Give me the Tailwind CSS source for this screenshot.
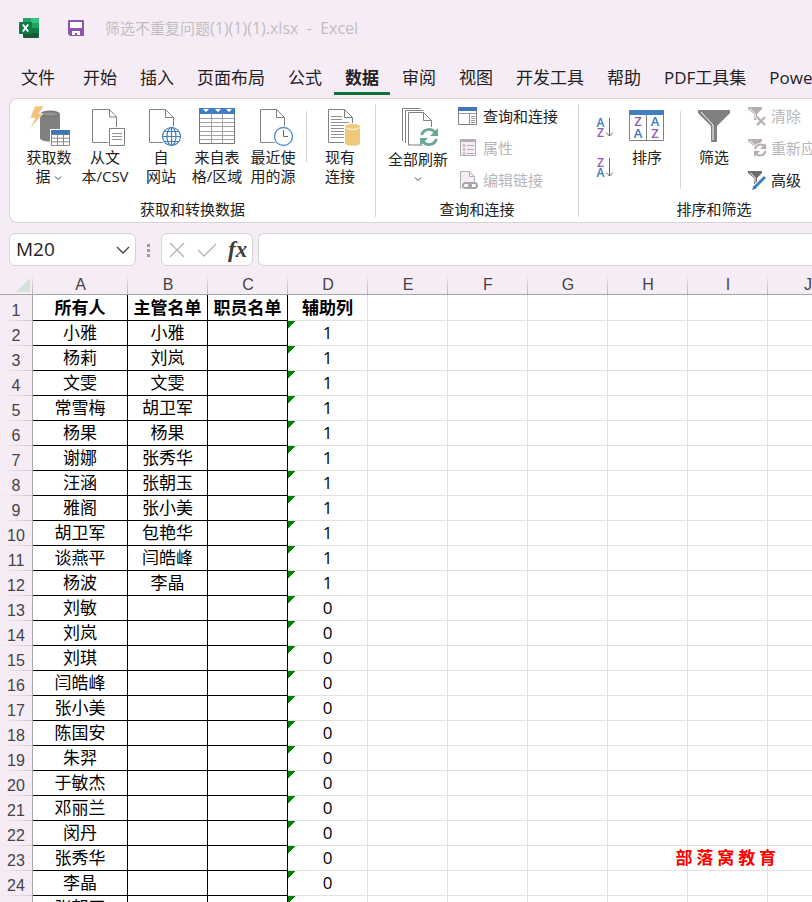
<!DOCTYPE html>
<html lang="zh-CN"><head>
<meta charset="utf-8"/>
<meta content="width=device-width, initial-scale=1.0" name="viewport"/>
<title>筛选不重复问题(1)(1)(1).xlsx - Excel</title>
<script src="https://cdn.jsdelivr.net/npm/@tailwindcss/browser@4"></script>
</head>
<body class="h-screen overflow-hidden flex flex-col bg-[#f6ecf6] text-[#222] font-['Open_Sans','Noto_Sans_CJK_SC',sans-serif]">

<!-- Title bar -->
<header class="flex items-center h-14 pl-[19px] shrink-0">
<svg class="w-5 h-5" viewBox="0 0 20 20">
<rect x="4" y="0" width="16" height="20" rx="1" fill="#185c37"/>
<path d="M5 0h7v5H4V1a1 1 0 0 1 1-1z" fill="#21a366"/>
<path d="M12 0h7a1 1 0 0 1 1 1v4h-8z" fill="#33c481"/>
<path d="M4 5h8v5H4z" fill="#107c41"/>
<path d="M12 5h8v5h-8z" fill="#21a366"/>
<path d="M12 10h8v5h-8z" fill="#107c41"/>
<rect x="0" y="4" width="13" height="12" rx="1" fill="#107c41"/>
<path d="M3.8 6.5l5.4 7M9.2 6.5l-5.4 7" stroke="#fff" stroke-width="2"/>
</svg>
<button class="ml-[29px]" aria-label="保存">
<svg class="w-4 h-4 block" viewBox="0 0 16 16">
<path d="M0 1a1 1 0 0 1 1-1h14a1 1 0 0 1 1 1v15H2l-2-2z" fill="#8e55b0"/>
<path d="M2 2h12v6H2z" fill="#fff"/>
<path d="M4 11h8v4H9v-2H7v2H4z" fill="#fff"/>
</svg>
</button>
<h1 class="ml-[21px] text-[15px] leading-5 text-[#c1bdc1] whitespace-pre">筛选不重复问题<span class="text-base leading-5">(1)(1)(1).xlsx  -  Excel</span></h1>
</header>

<!-- Tabs -->
<nav class="flex gap-px h-[39px] pl-[10px] shrink-0 text-[17px] whitespace-nowrap leading-[44px]">
<a href="#" class="px-[11px] mr-[5px]">文件</a>
<a href="#" class="px-[11px]">开始</a>
<a href="#" class="px-[11px]">插入</a>
<a href="#" class="px-[11px]">页面布局</a>
<a href="#" class="px-[11px]">公式</a>
<a href="#" class="px-[11px] font-bold border-b-3 border-[#0f703b]">数据</a>
<a href="#" class="px-[11px]">审阅</a>
<a href="#" class="px-[11px]">视图</a>
<a href="#" class="px-[11px]">开发工具</a>
<a href="#" class="px-[11px]">帮助</a>
<a href="#" class="px-[11px]">PDF工具集</a>
<a href="#" class="px-[11px]">Power Pivot</a>
</nav>

<!-- Ribbon -->
<section class="ml-[9px] mt-[3px] h-[125px] flex shrink-0 bg-white border border-r-0 border-[#d6d2d6] rounded-l-lg text-[15px] leading-[19px] whitespace-nowrap overflow-hidden py-[5px]">

<div class="flex flex-col justify-between w-[366px] shrink-0 border-r border-[#d6d6d6]">
<div class="flex pl-[11px]">
<button class="w-14 flex flex-col items-center">
<svg class="w-14 h-11" viewBox="0 0 56 44">
<path d="M19 10v24c0 2 4 3.500 10 3.500s10-1.500 10-3.500V10z" fill="#808080"/>
<ellipse cx="29" cy="10" rx="10" ry="3.500" fill="#808080"/>
<ellipse cx="29" cy="10" rx="8.500" ry="2.300" fill="#949494" stroke="#6e6e6e"/>
<path d="M14 2h9l-5 7.500h4L9 25l5-11H9z" fill="#f0c27c" stroke="#fff" stroke-width=".6"/>
<path d="M29 25h21v18H29z" fill="#fff"/>
<path d="M30.500 30.500h18v11h-18zM30.500 34.200h18M30.500 37.800h18M36.500 30v11M42.500 30v11" fill="#fff" stroke="#8a8a8a"/>
<path d="M30 26h19v4.500H30z" fill="#3f78b8"/>
</svg>
<span>获取数<br>据 <svg class="inline w-2 h-2" viewBox="0 0 8 8"><path d="M1 2.500l3 3 3-3" fill="none" stroke="#444"/></svg></span>
</button>
<button class="w-14 flex flex-col items-center">
<svg class="w-14 h-11" viewBox="0 0 56 44">
<path d="M15.500 5.500h17l7 7.500v25.500h-24z" fill="#fff" stroke="#808080"/>
<path d="M32.500 5.500v7.500h7" fill="none" stroke="#808080"/>
<path d="M31 23h18v20H31z" fill="#fff"/>
<path d="M32.500 24.500h15v17h-15z" fill="#fff" stroke="#808080"/>
<path d="M35 29.500h10M35 32.500h10M35 35.500h10" stroke="#909090"/>
</svg>
<span>从文<br>本/CSV</span>
</button>
<button class="w-14 flex flex-col items-center">
<svg class="w-14 h-11" viewBox="0 0 56 44">
<path d="M16.500 5.500h16l8 8v25h-24z" fill="#fff" stroke="#808080"/>
<path d="M32.500 5.500v8h8" fill="none" stroke="#808080"/>
<circle cx="38.500" cy="32.500" r="10.500" fill="#fff"/>
<g fill="none" stroke="#3f7fbf" stroke-width="1.200"><circle cx="38.500" cy="32.500" r="9"/><ellipse cx="38.500" cy="32.500" rx="4.500" ry="9"/><path d="M38.500 23.500v18M29.500 32.500h18M31 27.500h15M31 37.500h15"/></g>
</svg>
<span>自<br>网站</span>
</button>
<button class="w-14 flex flex-col items-center">
<svg class="w-14 h-11" viewBox="0 0 56 44">
<path d="M10.500 9.500h35v30h-35z" fill="#fff"/>
<path d="M11 14.500h34M11 18.500h34M11 22.500h34M11 27.500h34M11 31.500h34M11 35.500h34M22.500 10v30M33.500 10v30" stroke="#a79fa7"/>
<path d="M10.500 9.500h35v30h-35z" fill="none" stroke="#7a7a7a"/>
<path d="M10 4h36v6H10z" fill="#417fc0"/>
<path d="M14 5h6l-3 3zM26 5h6l-3 3zM37 5h6l-3 3z" fill="#fff"/>
</svg>
<span>来自表<br>格/区域</span>
</button>
<button class="w-14 flex flex-col items-center">
<svg class="w-14 h-11" viewBox="0 0 56 44">
<path d="M15.500 5.500h16l8 8v25h-24z" fill="#fff" stroke="#808080"/>
<path d="M31.500 5.500v8h8" fill="none" stroke="#808080"/>
<circle cx="38.500" cy="32.500" r="10.500" fill="#fff"/>
<circle cx="38.500" cy="32.500" r="9" fill="#fff" stroke="#4a8cc9" stroke-width="1.300"/>
<path d="M38.500 26v6.500h4.500" fill="none" stroke="#666"/>
</svg>
<span>最近使<br>用的源</span>
</button>
<div class="w-px h-[51px] mt-[7px] mx-[5px] bg-[#d6d6d6]"></div>
<button class="w-14 flex flex-col items-center">
<svg class="w-14 h-11" viewBox="0 0 56 44">
<path d="M16.500 5.500h16l8 8v25h-24z" fill="#fff" stroke="#808080"/>
<path d="M32.500 5.500v8h8" fill="none" stroke="#808080"/>
<path d="M19 12.500h11M19 15.500h11M19 18.500h18M19 21.500h18M19 24.500h14M19 27.500h14M19 30.500h14M19 33.500h14" stroke="#909090"/>
<path d="M32 22c0-4 17-4 17 0v18c0 4-17 4-17 0z" fill="#fff"/>
<path d="M33 22.500v17c0 3 15 3 15 0v-17z" fill="#edc978"/>
<ellipse cx="40.500" cy="22.500" rx="7.500" ry="2.500" fill="#edc978"/>
<path d="M33.500 23.500c2 2.500 12 2.500 14 0" fill="none" stroke="#fff"/>
</svg>
<span>现有<br>连接</span>
</button>
</div>
<div class="text-center h-5 leading-[25px]">获取和转换数据</div>
</div>

<div class="flex flex-col justify-between w-[203px] shrink-0 border-r border-[#d6d6d6]">
<div class="flex pl-[7px]">
<button class="w-[70px] flex flex-col items-center">
<svg class="w-[70px] h-[46px]" viewBox="0 0 70 46">
<path d="M19.500 37V4.500h18M22.500 39V6.500h18" fill="none" stroke="#808080"/>
<path d="M25.500 8.500h15l8 8v24.500h-23z" fill="#fff" stroke="#808080"/>
<path d="M40.500 8.500v8h8" fill="none" stroke="#808080"/>
<circle cx="46" cy="33" r="10.500" fill="#fff"/>
<path d="M38.500 31a7.800 7.800 0 0 1 14-2M53.500 35a7.800 7.800 0 0 1-14 2" fill="none" stroke="#6ba891" stroke-width="2.800"/>
<path d="M55 24v8h-8zM37 42v-8h8z" fill="#6ba891"/>
</svg>
<span>全部刷新</span>
<svg class="w-2 h-2 mt-1.5" viewBox="0 0 8 8"><path d="M1 2.500l3 3 3-3" fill="none" stroke="#444"/></svg>
</button>
<div class="flex flex-col items-start ml-[5px] -mt-1">
<button class="flex items-center h-8 gap-[5px]">
<svg class="w-5 h-5" viewBox="0 0 20 20">
<path d="M.5 3.500h18v15H.5z" fill="#fff" stroke="#808080"/><path d="M0 1h19v4H0z" fill="#3f78b8"/>
<path d="M1 7.500h17M11.500 8v10" stroke="#999" /><path d="M13 10.500h4M13 12.500h4M13 14.500h4M13 16.500h4" stroke="#999"/>
</svg>查询和连接</button>
<button class="flex items-center h-8 gap-[5px] text-[#b9b5b9]" disabled>
<svg class="w-5 h-5" viewBox="0 0 20 20">
<path d="M2.500 2.500h15v15h-15z" fill="#f6ecf6" stroke="#b5adb5"/><path d="M2 1h16v3H2z" fill="#b5adb5"/>
<path d="M9 7.500h7M9 11.500h7M9 15.500h7" stroke="#b5adb5"/>
<g fill="none" stroke="#b5adb5"><circle cx="6" cy="7.500" r="1"/><circle cx="6" cy="11.500" r="1"/><circle cx="6" cy="15.500" r="1"/></g>
</svg>属性</button>
<button class="flex items-center h-8 gap-[5px] text-[#b9b5b9]" disabled>
<svg class="w-5 h-5" viewBox="0 0 20 20">
<path d="M2.500 1.500h9l5 5v12h-14z" fill="#f6ecf6" stroke="#b5adb5"/><path d="M11.500 1.500v5h5" fill="none" stroke="#b5adb5"/>
<path d="M3.500 12h16.500v8H3.500z" fill="#fff"/>
<g fill="none" stroke="#aaa4aa" stroke-width="2"><rect x="5" y="13" width="8" height="5" rx="2.500"/><rect x="11" y="13" width="8" height="5" rx="2.500"/></g>
</svg>编辑链接</button>
</div>
</div>
<div class="text-center h-5 leading-[25px]">查询和连接</div>
</div>

<div class="flex flex-col justify-between w-[270px] shrink-0">
<div class="flex pl-[16px]">
<div class="flex flex-col gap-4 pt-[11px]">
<button aria-label="升序">
<svg class="w-5 h-6 block" viewBox="0 0 20 24" font-family="Open Sans" font-size="12" font-weight="600" text-anchor="middle">
<text x="5.500" y="12" fill="#3f78b8">A</text><text x="5.500" y="22" fill="#9257b8">Z</text>
<path d="M14.500 3v18M11 17.500l3.500 3.500L18 17.500" fill="none" stroke="#666"/>
</svg></button>
<button aria-label="降序">
<svg class="w-5 h-6 block" viewBox="0 0 20 24" font-family="Open Sans" font-size="12" font-weight="600" text-anchor="middle">
<text x="5.500" y="12" fill="#9257b8">Z</text><text x="5.500" y="22" fill="#3f78b8">A</text>
<path d="M14.500 3v18M11 17.500l3.500 3.500L18 17.500" fill="none" stroke="#666"/>
</svg></button>
</div>
<button class="w-14 ml-1 flex flex-col items-center">
<svg class="w-14 h-11" viewBox="0 0 56 44" font-family="Open Sans" font-size="13" font-weight="600" text-anchor="middle">
<path d="M10.500 8.500h34v28h-34zM27.500 10v26" fill="#fff" stroke="#808080"/><path d="M10 6h35v5H10z" fill="#417fc0"/>
<text x="19" y="22" fill="#9257b8">Z</text><text x="19" y="34" fill="#3f78b8">A</text>
<text x="36" y="22" fill="#3f78b8">A</text><text x="36" y="34" fill="#9257b8">Z</text>
</svg>
<span>排序</span>
</button>
<div class="w-px h-[78px] mt-[7px] mx-[5px] bg-[#d6d6d6]"></div>
<button class="w-14 flex flex-col items-center">
<svg class="w-14 h-11" viewBox="0 0 56 44">
<path d="M12 6h32v3L31 22v16h-6V22L12 9z" fill="#808080"/>
<path d="M15 8l12 13v15" fill="none" stroke="#fff"/>
</svg>
<span>筛选</span>
</button>
<div class="flex flex-col items-start ml-[5px] -mt-1">
<button class="flex items-center h-8 gap-1 text-[#b9b5b9]" disabled>
<svg class="w-5 h-5" viewBox="0 0 20 20">
<path d="M1 1h14v2L10 8v6H7V8L1 3z" fill="#b5adb5"/><path d="M3 2.500l5 5v5" fill="none" stroke="#fff"/>
<path d="M10 11l8 8M18 11l-8 8" stroke="#fff" stroke-width="4"/><path d="M10 11l8 8M18 11l-8 8" stroke="#b5adb5" stroke-width="2.200"/>
</svg>清除</button>
<button class="flex items-center h-8 gap-1 text-[#b9b5b9]" disabled>
<svg class="w-5 h-5" viewBox="0 0 20 20">
<path d="M1 1h14v2L10 8v6H7V8L1 3z" fill="#b5adb5"/><path d="M3 2.500l5 5v5" fill="none" stroke="#fff"/>
<circle cx="13" cy="12" r="7" fill="#fff"/>
<path d="M8 11a5.500 5.500 0 0 1 10-2M18.500 13a5.500 5.500 0 0 1-10 2" fill="none" stroke="#b5adb5" stroke-width="2"/><path d="M19 5v6h-6zM7 19v-6h6z" fill="#b5adb5"/>
</svg>重新应用</button>
<button class="flex items-center h-8 gap-1">
<svg class="w-5 h-5" viewBox="0 0 20 20">
<path d="M1 1h14v2L10 8v6H7V8L1 3z" fill="#6c6c6c"/><path d="M3 2.500l5 5v5" fill="none" stroke="#fff"/>
<path d="M17 8L7 18" stroke="#fff" stroke-width="5"/><path d="M18 7L7.500 17.500" stroke="#3f7fbf" stroke-width="3"/><path d="M6.500 15.500L5 20l4.500-1.500z" fill="#3f7fbf"/>
</svg>高级</button>
</div>
</div>
<div class="text-center h-5 leading-[25px]">排序和筛选</div>
</div>
</section>

<!-- Formula bar -->
<section class="flex items-center h-[33px] mt-[10px] mb-[9px] pl-[9px] shrink-0">
<div class="flex items-center w-[127px] h-full bg-white border border-[#d6d2d6] rounded-md">
<input id="name-box" aria-label="名称框" class="w-[100px] pl-[6px] text-[19px] outline-none" value="M20"/>
<button class="ml-[5px]" aria-label="展开名称框"><svg class="w-4 h-4 block" viewBox="0 0 16 16"><path d="M2 5l6 6 6-6" fill="none" stroke="#444" stroke-width="1.400"/></svg></button>
</div>
<svg class="w-[25px] h-4" viewBox="0 0 25 16"><path d="M11 2h3v3h-3zM11 7h3v3h-3zM11 12h3v3h-3z" fill="#a29ba2"/></svg>
<div class="flex items-center w-[92px] h-full pl-[7px] bg-white border border-[#d6d2d6] rounded-md">
<button aria-label="取消"><svg class="w-4 h-4 block" viewBox="0 0 16 16"><path d="M1 1l14 14M15 1L1 15" stroke="#b5b5b5" stroke-width="1.400"/></svg></button>
<button class="ml-3" aria-label="输入"><svg class="w-5 h-4 block" viewBox="0 0 20 16"><path d="M1 8l6 6L19 2" fill="none" stroke="#b5b5b5" stroke-width="1.400"/></svg></button>
<button class="ml-[11px] font-['Liberation_Serif',serif] italic font-bold text-[23px] leading-none text-[#3c3c3c]">fx</button>
</div>
<input aria-label="编辑栏" class="ml-[5px] flex-1 h-full px-2 bg-white border border-r-0 border-[#d6d2d6] rounded-l-md outline-none"/>
</section>

<!-- Worksheet -->
<main class="relative flex-1 min-h-0 overflow-hidden">
<table class="table-fixed w-[1248px] border-separate border-spacing-0 text-[17px] leading-6 text-center text-black whitespace-nowrap">
<colgroup>
<col class="w-[33px]"/><col class="w-[95px]"/>
<col class="w-20"/><col class="w-20"/><col class="w-20"/><col class="w-20"/><col class="w-20"/>
<col class="w-20"/><col class="w-20"/><col class="w-20"/><col class="w-20"/><col class="w-20"/>
<col class="w-20"/><col class="w-20"/><col class="w-20"/><col class="w-20"/>
</colgroup>
<thead>
<tr id="column-letters" class="h-5">
<th class="p-0 border-b border-[#a6a6a6] bg-[linear-gradient(to_top,#b5b5b5,transparent)] bg-[length:1px_100%] bg-right bg-no-repeat"><svg class="w-[14px] h-[14px] ml-auto mr-[3px]" viewBox="0 0 14 14"><path d="M14 0v14H0z" fill="#d3e3da"/></svg></th>
</tr>
</thead>
<tbody id="sheet-rows"></tbody>
</table>
<div class="absolute right-9 bottom-[33px] text-[17px] leading-6 font-bold text-[#f00] font-['KaiTi','Noto_Sans_CJK_SC',serif]">部 落 窝 教 育</div>
</main>

<script>
    const everyone = ['小雅', '杨莉', '文雯', '常雪梅', '杨果', '谢娜', '汪涵', '雅阁', '胡卫军', '谈燕平', '杨波', '刘敏',
        '刘岚', '刘琪', '闫皓峰', '张小美', '陈国安', '朱羿', '于敏杰', '邓丽兰', '闵丹', '张秀华', '李晶', '张朝玉'];
    const managers = ['小雅', '刘岚', '文雯', '胡卫军', '杨果', '张秀华', '张朝玉', '张小美', '包艳华', '闫皓峰', '李晶'];
    const letters = 'ABCDEFGHIJKLMNO'.split('');

    const letterClass = "p-0 font-normal font-['Liberation_Sans',sans-serif] text-base leading-[19px] text-[#444] border-b border-[#a6a6a6] bg-[linear-gradient(to_top,#b5b5b5,transparent)] bg-[length:1px_100%] bg-right bg-no-repeat";
    const numberClass = "p-0 align-bottom font-normal font-['Liberation_Sans',sans-serif] text-base leading-5 text-[#444] border-r border-[#a6a6a6] bg-[linear-gradient(to_left,#d0cad0,transparent)] bg-[length:100%_1px] bg-bottom bg-no-repeat";
    const listClass = 'p-0 border-r border-b border-black bg-white';
    const helperClass = 'p-0 border-r border-b border-[#e1e1e1] bg-white bg-[linear-gradient(135deg,#008000_5px,transparent_5px)]';
    const plainClass = 'p-0 border-r border-b border-[#e1e1e1] bg-white';

    document.getElementById('column-letters').insertAdjacentHTML('beforeend',
        letters.map(l => `<th class="${letterClass}">${l}</th>`).join(''));

    function buildRow(number, values) {
        const isHeader = number === 1;
        const cells = letters.map((letter, i) => {
            let cls = plainClass;
            if (i < 3) cls = listClass;
            else if (i === 3 && !isHeader) cls = helperClass;
            if (isHeader) cls += ' font-bold';
            return `<td class="${cls}">${values[i] ?? ''}</td>`;
        }).join('');
        return `<tr class="${isHeader ? 'h-[26px]' : 'h-[25px]'}"><th class="${numberClass}">${number}</th>${cells}</tr>`;
    }

    // The helper column is 1 as long as there is a manager on the row
    const rows = [buildRow(1, ['所有人', '主管名单', '职员名单', '辅助列'])];
    everyone.forEach((name, i) => {
        rows.push(buildRow(i + 2, [name, managers[i] ?? '', '', i < managers.length ? 1 : 0]));
    });
    document.getElementById('sheet-rows').innerHTML = rows.join('');
</script>

</body></html>
